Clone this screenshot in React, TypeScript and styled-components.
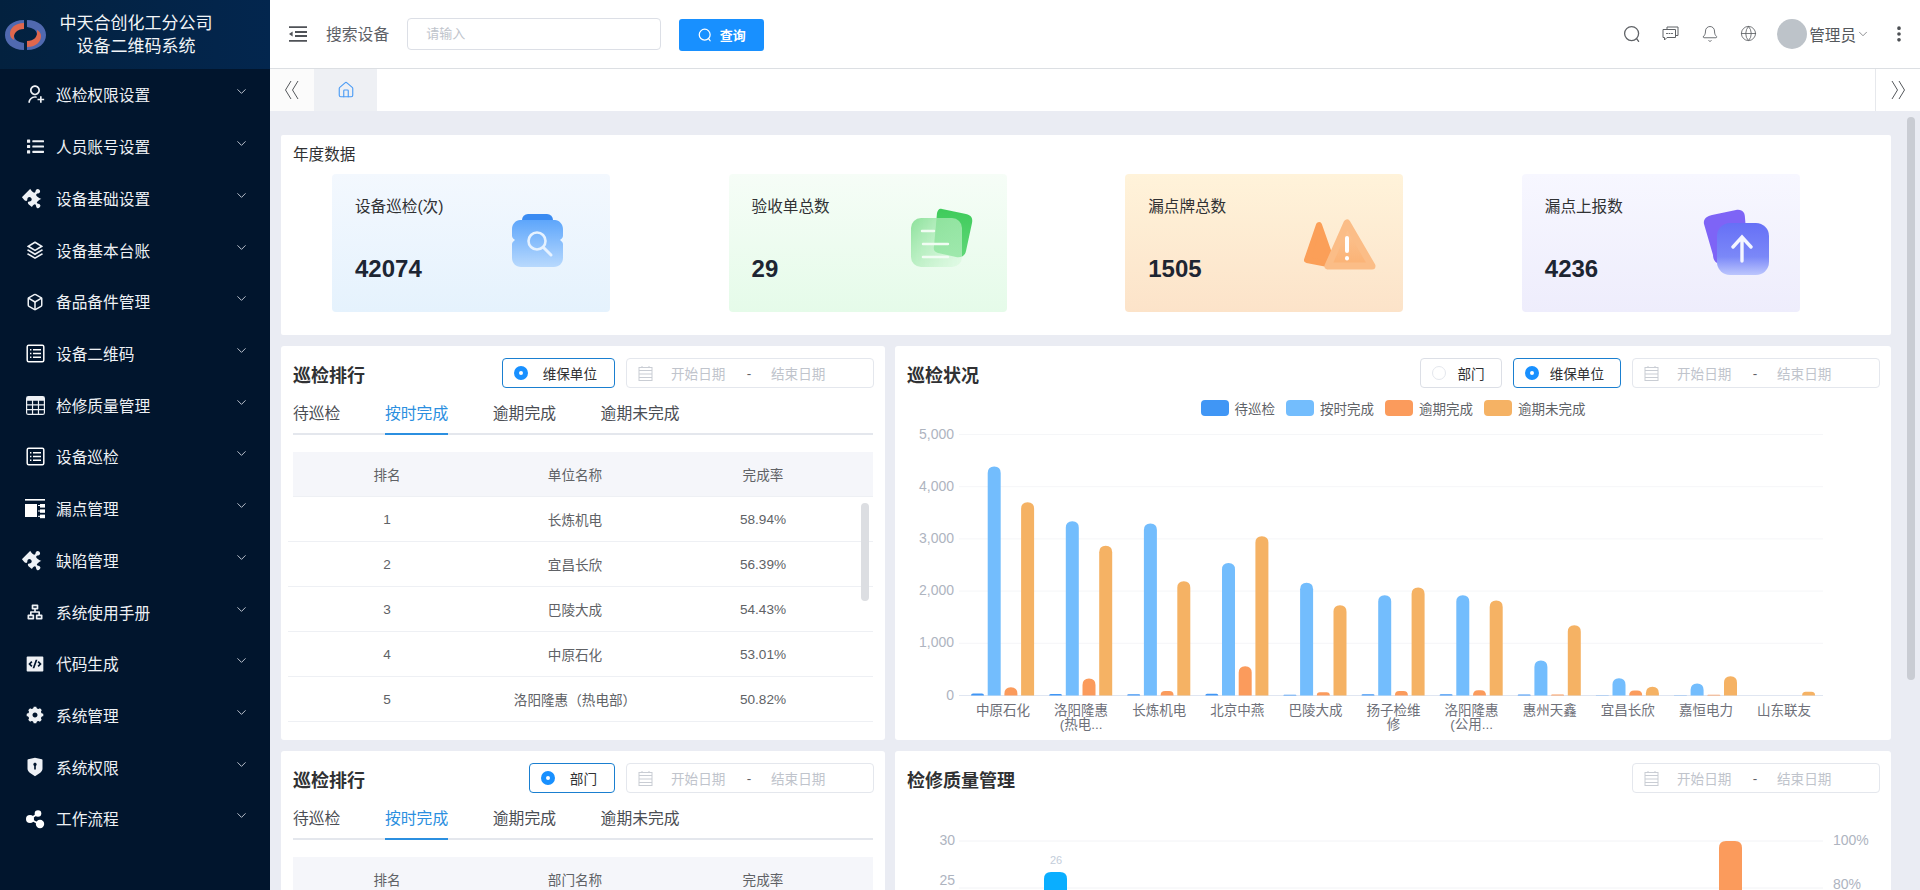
import React from "react";
import styled, { createGlobalStyle } from "styled-components";
import { Bell, ChevronDown, EllipsisVertical, Globe, House } from "lucide-react";
import { BsTable } from "react-icons/bs";
import { FaList, FaPuzzlePiece } from "react-icons/fa";
import { FiBox } from "react-icons/fi";
import {
  RiCodeBoxFill,
  RiOrganizationChart,
  RiSettings5Fill,
  RiShieldKeyholeFill,
  RiStackLine,
  RiUserAddLine,
} from "react-icons/ri";

const FONT = `"Liberation Sans", "Noto Sans CJK SC", sans-serif`;
const BLUE = "#1890ff";

const GlobalStyle = createGlobalStyle`
  html, body {
    margin: 0;
    padding: 0;
    height: 100%;
    overflow: hidden;
    font-family: ${FONT};
    color: #303133;
  }
  * { box-sizing: border-box; }
`;

const Page = styled.div`
  display: flex;
  width: 100%;
  height: 100vh;
  overflow: hidden;
`;

/* sidebar */
const Sidebar = styled.aside`
  flex: 0 0 270px;
  background: #01152d;
  color: #fff;
`;

const Brand = styled.div`
  display: flex;
  align-items: center;
  height: 69px;
  padding-left: 5px;
  background: linear-gradient(90deg, #03213f, #03264e);
`;

const BrandName = styled.div`
  width: 162px;
  margin-left: 9px;
  font-size: 17px;
  line-height: 23px;
  text-align: center;
  white-space: nowrap;
  color: #f2f5f8;
`;

const MenuItem = styled.div`
  display: flex;
  align-items: center;
  height: 51.72px;
  padding-left: 25px;
  font-size: 15.7px;
  color: #eef1f5;
`;

const MenuIcon = styled.span`
  display: flex;
  justify-content: center;
  align-items: center;
  width: 20px;
  height: 20px;
  margin-right: 11px;
  font-size: 20px;
`;

const MenuLabel = styled.span`
  flex: 1;
`;

const MenuArrow = styled(ChevronDown)`
  width: 15px;
  height: 15px;
  margin-right: 21px;
  margin-top: -6px;
  color: #c6ccd6;
`;

const PuzzleIcon = styled(FaPuzzlePiece)`
  transform: rotate(45deg);
`;

/* top bar */
const Main = styled.div`
  flex: 1;
  min-width: 0;
  display: flex;
  flex-direction: column;
`;

const TopBar = styled.header`
  flex: 0 0 69px;
  display: flex;
  align-items: center;
  padding: 0 11px 1px 19px;
  background: #fff;
  border-bottom: 1px solid #dcdfe3;
`;

const SearchLabel = styled.span`
  margin-left: 19px;
  font-size: 15.8px;
  color: #5d6066;
`;

const SearchInput = styled.div`
  width: 254px;
  height: 32px;
  margin-left: 18px;
  padding-left: 18px;
  border: 1px solid #dcdfe6;
  border-radius: 4px;
  font-size: 13px;
  line-height: 30px;
  color: #c0c4cc;
`;

const QueryButton = styled.div`
  display: flex;
  align-items: center;
  justify-content: center;
  gap: 8px;
  width: 85px;
  height: 32px;
  margin: 2px 0 0 18px;
  border-radius: 3px;
  background: ${BLUE};
  color: #fff;
  font-size: 13px;
  font-weight: 700;
`;

const TopBarRight = styled.div`
  margin-left: auto;
  display: flex;
  align-items: center;
  color: #5f6266;
`;

const ToolIcon = styled.span`
  display: flex;
  justify-content: center;
  width: 39px;
`;

const Avatar = styled.span`
  width: 30px;
  height: 30px;
  margin-left: 9px;
  border-radius: 50%;
  background: #bdc3c9;
`;

const UserName = styled.span`
  margin-left: 2px;
  font-size: 15.6px;
  color: #55585c;
`;

const DotsButton = styled.span`
  display: flex;
  margin-left: 19px;
  color: #4b4e52;
`;

/* tab strip */
const TabStrip = styled.div`
  flex: 0 0 42px;
  display: flex;
  align-items: stretch;
  background: #fff;
`;

const StripButton = styled.div`
  flex: 0 0 44px;
  display: flex;
  align-items: center;
  justify-content: center;
  color: #6d7076;
  background: #fbfbfb;
`;

const StripButtonRight = styled(StripButton)`
  flex-basis: 45px;
  margin-left: auto;
  background: #fff;
  border-left: 1px solid #e6e8ec;
`;

const HomeTab = styled.div`
  flex: 0 0 63px;
  display: flex;
  align-items: center;
  justify-content: center;
  background: #eef0f4;
  color: #4a9bf5;
`;

/* content */
const Content = styled.main`
  position: relative;
  flex: 1;
  min-height: 0;
  overflow: hidden;
  padding: 24px 29px 0 11px;
  background: #eaecf3;
`;

const PageScrollThumb = styled.div`
  position: absolute;
  top: 6px;
  right: 5px;
  width: 8px;
  height: 563px;
  border-radius: 4px;
  background: #c9ccd3;
`;

const YearCard = styled.section`
  height: 200px;
  padding-top: 10px;
  border-radius: 2px;
  background: #fff;
`;

const YearTitle = styled.div`
  padding-left: 12px;
  font-size: 15.6px;
  line-height: 20px;
  color: #303133;
`;

const StatRow = styled.div`
  display: flex;
  gap: 118.6px;
  margin-top: 9px;
  padding-left: 51px;
`;

const StatCard = styled.div<{ $from: string; $to: string }>`
  display: flex;
  justify-content: space-between;
  align-items: center;
  width: 278px;
  height: 138px;
  padding: 0 25px 0 23px;
  border-radius: 4px;
  background: linear-gradient(180deg, ${(p) => p.$from}, ${(p) => p.$to});
`;

const StatText = styled.div`
  align-self: stretch;
  padding-top: 22px;
`;

const StatLabel = styled.div`
  font-size: 15.6px;
  line-height: 22px;
  color: #303133;
`;

const StatValue = styled.div`
  margin-top: 37px;
  font-size: 24px;
  line-height: 28px;
  font-weight: 700;
  color: #1d2532;
`;

const StatIcon = styled.svg`
  flex: 0 0 80px;
  width: 80px;
  height: 80px;
  filter: blur(0.6px);
`;

const PanelGrid = styled.div`
  display: grid;
  grid-template-columns: 604px 996px;
  grid-auto-rows: 394px;
  gap: 11px 10px;
  margin-top: 11px;
`;

const Panel = styled.section`
  padding: 12px;
  border-radius: 3px;
  background: #fff;
`;

const PanelHead = styled.div`
  display: flex;
  align-items: center;
  justify-content: space-between;
  height: 30px;
  margin-right: -1px;
`;

const PanelTitle = styled.h3`
  margin: 2px 0 0;
  font-size: 18px;
  font-weight: 700;
  color: #303133;
`;

const Controls = styled.div`
  display: flex;
  gap: 11px;
`;

const RadioBox = styled.div<{ $on?: boolean; $tight?: boolean }>`
  display: flex;
  align-items: center;
  gap: ${(p) => (p.$tight ? 11 : 15)}px;
  height: 30px;
  padding: 0 ${(p) => (p.$tight ? 16 : 17)}px 0 11px;
  border: 1px solid ${(p) => (p.$on ? "#1a7fd0" : "#dcdfe6")};
  border-radius: 4px;
  font-size: 13.6px;
  color: #303133;
`;

const RadioDot = styled.span<{ $on?: boolean }>`
  width: 14px;
  height: 14px;
  border-radius: 50%;
  background: #fff;
  border: ${(p) => (p.$on ? `5px solid ${BLUE}` : "1px solid #e4e7ed")};
`;

const DateBox = styled.div`
  display: flex;
  align-items: center;
  width: 248px;
  height: 30px;
  padding-left: 11px;
  border: 1px solid #e4e7ed;
  border-radius: 4px;
  font-size: 13.6px;
  color: #c0c4cc;
`;

const DateText = styled.span`
  width: 56px;
  white-space: nowrap;
`;

const DateDash = styled.span`
  width: 44px;
  text-align: center;
  color: #606266;
`;

const CalendarSvg = styled.svg`
  width: 15px;
  height: 15px;
  margin-right: 18px;
`;

const Tabs = styled.div`
  display: flex;
  gap: 44.6px;
  height: 47px;
  padding-top: 15px;
  border-bottom: 2px solid #e4e7ed;
`;

const TabItem = styled.div<{ $on?: boolean }>`
  height: 32px;
  font-size: 15.8px;
  line-height: 22px;
  color: ${(p) => (p.$on ? "#2b8fe0" : "#4b4e54")};
  border-bottom: 2px solid ${(p) => (p.$on ? "#2b8fe0" : "transparent")};
`;

const TableWrap = styled.div`
  position: relative;
  margin-top: 17px;
`;

const TableRow = styled.div<{ $head?: boolean }>`
  display: grid;
  grid-template-columns: repeat(3, 188px);
  align-items: center;
  height: 45px;
  margin-left: ${(p) => (p.$head ? 0 : -5)}px;
  padding-left: ${(p) => (p.$head ? 0 : 5)}px;
  background: ${(p) => (p.$head ? "#f5f6fa" : "#fff")};
  border-bottom: 1px solid #eef0f4;
  font-size: 13.6px;
  text-align: center;
  color: #606266;
`;

const TableThumb = styled.div`
  position: absolute;
  top: 51px;
  right: 4px;
  width: 8px;
  height: 98px;
  border-radius: 4px;
  background: #dcdee2;
`;

const Legend = styled.div`
  display: flex;
  justify-content: center;
  gap: 11px;
  margin-top: 12px;
`;

const LegendItem = styled.div`
  display: flex;
  align-items: center;
  gap: 6px;
  height: 16px;
  font-size: 13.5px;
  color: #5f6368;
`;

const LegendSwatch = styled.span<{ $color: string }>`
  width: 28px;
  height: 16px;
  border-radius: 4px;
  background: ${(p) => p.$color};
`;

const ChartSvg = styled.svg`
  display: block;
  font-family: ${FONT};
`;

const StatusChartSvg = styled(ChartSvg)`
  margin-top: 8px;
`;

/* drawings */
const LOGO_BLUE = "M19 1C7 1 0 8 0 16s7 15 19 15v-7c-6-1-10-3-10-8s4-7 10-8z";
const LOGO_ORANGE = "M19 4C10 4 5 9 5 15c0 3 2 5 4 6-1-7 3-11 10-11z";

const BrandLogo = () => (
  <svg width="41" height="32" viewBox="0 0 41 32">
    <path d={LOGO_BLUE} fill="#5069b0" />
    <path d={LOGO_ORANGE} fill="#e0674d" />
    <g transform="rotate(180 20.5 16)">
      <path d={LOGO_BLUE} fill="#5069b0" />
      <path d={LOGO_ORANGE} fill="#e0674d" />
    </g>
  </svg>
);

const LeakIcon = () => (
  <svg width="20" height="20" viewBox="0 0 20 20" fill="#fff">
    <rect x="0" y="0" width="20" height="1.6" />
    <rect x="0" y="5" width="12" height="13" />
    <rect x="15" y="5" width="5" height="3.6" />
    <rect x="15" y="10.4" width="5" height="3.4" />
    <rect x="15" y="15.6" width="5" height="3.6" />
    <rect x="13" y="6" width="2" height="1" />
    <rect x="13" y="11.5" width="2" height="1" />
    <rect x="13" y="16.8" width="2" height="1" />
  </svg>
);

const ListBoxIcon = () => (
  <svg width="19" height="19" viewBox="0 0 19 19" fill="none" stroke="#fff" strokeWidth="1.5">
    <rect x="1.2" y="1.2" width="16.6" height="16.6" rx="1.5" />
    <path d="M4 5.8h1.4M7 5.8h8M4 9.5h1.4M7 9.5h8M4 13.2h1.4M7 13.2h8" />
  </svg>
);

const ShareIcon = () => (
  <svg width="20" height="20" viewBox="0 0 20 20" fill="#fff">
    <path d="M5 10 13 4.5M5 10l10 5.5" stroke="#fff" strokeWidth="1.6" />
    <circle cx="5" cy="10" r="4" />
    <circle cx="13" cy="4.5" r="3.3" />
    <circle cx="15" cy="15" r="4.2" />
  </svg>
);

const CollapseMark = () => (
  <svg width="16" height="20" viewBox="0 0 16 20" fill="none" stroke="#55585c" strokeWidth="1">
    <path d="M7 1 1.5 10 7 19M14 1 8.5 10 14 19" />
  </svg>
);

const ExpandMark = () => (
  <svg width="16" height="20" viewBox="0 0 16 20" fill="none" stroke="#55585c" strokeWidth="1">
    <path d="M2 1l5.5 9L2 19M9 1l5.5 9L9 19" />
  </svg>
);

const FoldIcon = () => (
  <svg width="18" height="16" viewBox="0 0 18 16" fill="none" stroke="#4f5257" strokeWidth="1.8">
    <path d="M0 1.2h18M6 6h12M6 10h12M0 14.8h18" />
    <path d="M0 8l3.6-2.6v5.2z" fill="#4f5257" stroke="none" />
  </svg>
);

const SearchGlyph = ({ size = 18, sw = 1.3 }: { size?: number; sw?: number }) => (
  <svg width={size} height={size} viewBox="0 0 18 18" fill="none" stroke="currentColor" strokeWidth={sw}>
    <circle cx="8.6" cy="8.6" r="7" />
    <path d="M13.6 13.6 15.6 16.4" strokeLinecap="round" />
  </svg>
);

const ChatGlyph = () => (
  <svg width="17" height="16" viewBox="0 0 17 16" fill="none" stroke="currentColor" strokeWidth="1">
    <path d="M5 3V1h11v8.5h-2" />
    <path d="M1 3.5h12.5v8H5L2.5 14v-2.5H1z" />
    <path d="M4.5 7.5h1M7 7.5h1M9.5 7.5h1" strokeLinecap="round" />
  </svg>
);

const CalendarIcon = () => (
  <CalendarSvg viewBox="0 0 15 15" fill="none" stroke="#c9cdd4" strokeWidth="1">
    <rect x="1" y="1.5" width="13" height="13" />
    <path d="M1 4.5h13M1 8h13M1 11.5h13M4 0v2M11 0v2" />
  </CalendarSvg>
);

const SearchStatIcon = () => (
  <StatIcon viewBox="0 0 80 80">
    <defs>
      <linearGradient id="sg1" x1="0" y1="0" x2="0" y2="1">
        <stop offset="0" stopColor="#5ea6fb" />
        <stop offset="1" stopColor="#b8d9fd" />
      </linearGradient>
    </defs>
    <rect x="17" y="11" width="31" height="14" rx="6" fill="#3a8bf2" />
    <path
      d="M15 17h35c4 0 8 4 8 9v7c0 2-2 3-3 4 1 1 3 2 3 4v14c0 5-4 9-9 9H16c-5 0-9-4-9-9V41c0-2 2-3 3-4-1-1-3-2-3-4v-7c0-5 4-9 8-9z"
      fill="url(#sg1)"
    />
    <circle cx="32" cy="38" r="8.5" fill="none" stroke="#e6f2ff" strokeWidth="2.6" />
    <path d="M38.5 44.5 46 52" stroke="#e6f2ff" strokeWidth="3" strokeLinecap="round" />
  </StatIcon>
);

const DocStatIcon = () => (
  <StatIcon viewBox="0 0 80 80">
    <defs>
      <linearGradient id="sg2" x1="0" y1="0" x2="1" y2="0.8">
        <stop offset="0" stopColor="#86df95" stopOpacity="0.95" />
        <stop offset="1" stopColor="#d2f7d8" stopOpacity="0.55" />
      </linearGradient>
      <linearGradient id="sg2b" x1="0" y1="0" x2="0" y2="1">
        <stop offset="0" stopColor="#3fcb5b" />
        <stop offset="1" stopColor="#5fd777" />
      </linearGradient>
    </defs>
    <path d="M40 6l24 5c5 1 7 4 6 9l-6 28c-1 5-5 7-10 6L36 50c-3-1-5-3-4-7l3-33c1-3 2-5 5-4z" fill="url(#sg2b)" />
    <rect x="9" y="15" width="51" height="49" rx="10" fill="url(#sg2)" />
    <path d="M20 28h12M21 41h25M21 54h25" stroke="#f1fcf3" strokeWidth="2.4" strokeLinecap="round" />
  </StatIcon>
);

const WarnStatIcon = () => (
  <StatIcon viewBox="0 0 80 80">
    <defs>
      <linearGradient id="sg3" x1="0" y1="0" x2="0" y2="1">
        <stop offset="0" stopColor="#fcc595" />
        <stop offset="1" stopColor="#fbb274" />
      </linearGradient>
    </defs>
    <path d="M21 22 9 57l26 5z" fill="#fb9f58" stroke="#fb9f58" strokeWidth="6" strokeLinejoin="round" />
    <path d="M49 20 30 63h44z" fill="url(#sg3)" stroke="#fbbd87" strokeWidth="7" strokeLinejoin="round" />
    <rect x="47" y="33" width="4" height="17" rx="2" fill="#fff" />
    <rect x="47" y="53" width="4" height="4.5" rx="2" fill="#fff" />
  </StatIcon>
);

const UploadStatIcon = () => (
  <StatIcon viewBox="0 0 80 80">
    <defs>
      <linearGradient id="sg4" x1="0" y1="0" x2="0" y2="1">
        <stop offset="0" stopColor="#6670f6" />
        <stop offset="0.65" stopColor="#7b88f8" />
        <stop offset="1" stopColor="#bcc6fd" />
      </linearGradient>
    </defs>
    <path d="M17 12l24-5c7-1 9 3 9 8l3 36c0 5-4 9-9 9l-18 1c-5 0-8-4-8-9L9 21c-1-5 3-8 8-9z" fill="#7e64f6" />
    <rect x="22" y="20" width="52" height="52" rx="13" fill="url(#sg4)" />
    <path d="M47 58V35M38 44l9-10 9 10" fill="none" stroke="#f4f6ff" strokeWidth="3.4" strokeLinecap="round" />
  </StatIcon>
);

/* data */
const menu: { label: string; icon: React.ReactNode }[] = [
  { label: "巡检权限设置", icon: <RiUserAddLine size={23} /> },
  { label: "人员账号设置", icon: <FaList size={17} /> },
  { label: "设备基础设置", icon: <PuzzleIcon size={20} /> },
  { label: "设备基本台账", icon: <RiStackLine size={21} /> },
  { label: "备品备件管理", icon: <FiBox size={18} /> },
  { label: "设备二维码", icon: <ListBoxIcon /> },
  { label: "检修质量管理", icon: <BsTable size={19} /> },
  { label: "设备巡检", icon: <ListBoxIcon /> },
  { label: "漏点管理", icon: <LeakIcon /> },
  { label: "缺陷管理", icon: <PuzzleIcon size={20} /> },
  { label: "系统使用手册", icon: <RiOrganizationChart size={22} /> },
  { label: "代码生成", icon: <RiCodeBoxFill size={22} /> },
  { label: "系统管理", icon: <RiSettings5Fill size={22} /> },
  { label: "系统权限", icon: <RiShieldKeyholeFill size={22} /> },
  { label: "工作流程", icon: <ShareIcon /> },
];

const stats = [
  { label: "设备巡检(次)", value: "42074", from: "#f3f8fe", to: "#e5f2fd", icon: <SearchStatIcon /> },
  { label: "验收单总数", value: "29", from: "#f6fdf7", to: "#e5fbe9", icon: <DocStatIcon /> },
  { label: "漏点牌总数", value: "1505", from: "#fff3da", to: "#fce3c9", icon: <WarnStatIcon /> },
  { label: "漏点上报数", value: "4236", from: "#f7f7ff", to: "#eeedfc", icon: <UploadStatIcon /> },
];

const tabNames = ["待巡检", "按时完成", "逾期完成", "逾期未完成"];

const ranks = [
  ["1", "长炼机电", "58.94%"],
  ["2", "宜昌长欣", "56.39%"],
  ["3", "巴陵大成", "54.43%"],
  ["4", "中原石化", "53.01%"],
  ["5", "洛阳隆惠（热电部）", "50.82%"],
];

const COLORS = ["#4096f5", "#73bdfd", "#fb9b5c", "#f5b264"];
const series = ["待巡检", "按时完成", "逾期完成", "逾期未完成"];

const categories: { name: string[]; values: number[] }[] = [
  { name: ["中原石化"], values: [40, 4387, 160, 3700] },
  { name: ["洛阳隆惠", "(热电..."], values: [30, 3340, 325, 2870] },
  { name: ["长炼机电"], values: [25, 3295, 85, 2190] },
  { name: ["北京中燕"], values: [35, 2540, 560, 3050] },
  { name: ["巴陵大成"], values: [15, 2160, 60, 1730] },
  { name: ["扬子检维", "修"], values: [25, 1920, 85, 2070] },
  { name: ["洛阳隆惠", "(公用..."], values: [25, 1920, 100, 1820] },
  { name: ["惠州天鑫"], values: [20, 670, 20, 1345] },
  { name: ["宜昌长欣"], values: [5, 330, 95, 170] },
  { name: ["嘉恒电力"], values: [5, 230, 15, 370] },
  { name: ["山东联友"], values: [0, 0, 0, 70] },
];

const topRounded = (x: number, base: number, w: number, h: number, r: number) => {
  const rad = Math.min(r, h, w / 2);
  return `M${x} ${base}V${base - h + rad}Q${x} ${base - h} ${x + rad} ${base - h}H${x + w - rad}Q${x + w} ${base - h} ${x + w} ${base - h + rad}V${base}Z`;
};

/* svg local coordinates: status chart starts at page (907, 424) */
const StatusChart = () => {
  const base = 271.5;
  const unit = 52.2 / 1000;
  const left = 57;
  const step = 78.1;
  return (
    <StatusChartSvg width="972" height="316" viewBox="0 0 972 316">
      {[0, 1, 2, 3, 4, 5].map((n) => (
        <g key={n}>
          <line
            x1={left - 5}
            x2="916"
            y1={base - n * 52.2}
            y2={base - n * 52.2}
            stroke={n === 0 ? "#e0e6f1" : "#f5f6f8"}
          />
          <text x="47" y={base - n * 52.2 + 4} textAnchor="end" fontSize="14" fill="#aeb4bf">
            {n === 0 ? "0" : `${n},000`}
          </text>
        </g>
      ))}
      {categories.map((cat, i) => {
        const center = left + step * i + 39;
        return (
          <g key={cat.name.join("")}>
            {cat.values.map((v, s) =>
              v > 0 ? (
                <path
                  key={series[s]}
                  d={topRounded(center - 32 + s * 16.7, base, 13, v * unit, 6.5)}
                  fill={COLORS[s]}
                />
              ) : null,
            )}
            {cat.name.map((line, l) => (
              <text
                key={line}
                x={center}
                y={base + 19 + l * 14}
                textAnchor="middle"
                fontSize="13.5"
                fill="#6e7079"
              >
                {line}
              </text>
            ))}
          </g>
        );
      })}
    </StatusChartSvg>
  );
};

/* svg local coordinates: quality chart starts at page (907, 793) */
const QualityChart = () => (
  <ChartSvg width="972" height="100" viewBox="0 0 972 100">
    <line x1="52" x2="916" y1="48" y2="48" stroke="#f2f3f6" />
    <line x1="52" x2="916" y1="95" y2="95" stroke="#f2f3f6" />
    <text x="48" y="52" textAnchor="end" fontSize="14" fill="#aeb4bf">30</text>
    <text x="48" y="92" textAnchor="end" fontSize="14" fill="#aeb4bf">25</text>
    <text x="926" y="52" fontSize="14" fill="#aeb4bf">100%</text>
    <text x="926" y="96" fontSize="14" fill="#aeb4bf">80%</text>
    <text x="149" y="71" textAnchor="middle" fontSize="11" fill="#c3cdda">26</text>
    <path d={topRounded(137, 100, 23, 21, 7)} fill="#0aaeff" />
    <path d={topRounded(812, 100, 23, 52, 7)} fill="#fb9b5c" />
  </ChartSvg>
);

const RadioOption = ({ label, on, tight }: { label: string; on?: boolean; tight?: boolean }) => (
  <RadioBox $on={on} $tight={tight}>
    <RadioDot $on={on} />
    {label}
  </RadioBox>
);

const DateRange = () => (
  <DateBox>
    <CalendarIcon />
    <DateText>开始日期</DateText>
    <DateDash>-</DateDash>
    <DateText>结束日期</DateText>
  </DateBox>
);

const RankPanel = ({ unit, nameCol, rows }: { unit: string; nameCol: string; rows: string[][] }) => (
  <Panel>
    <PanelHead>
      <PanelTitle>巡检排行</PanelTitle>
      <Controls>
        <RadioOption label={unit} on />
        <DateRange />
      </Controls>
    </PanelHead>
    <Tabs>
      {tabNames.map((name) => (
        <TabItem key={name} $on={name === "按时完成"}>
          {name}
        </TabItem>
      ))}
    </Tabs>
    <TableWrap>
      <TableRow $head>
        <span>排名</span>
        <span>{nameCol}</span>
        <span>完成率</span>
      </TableRow>
      {rows.map((row) => (
        <TableRow key={row[0]}>
          {row.map((cell) => (
            <span key={cell}>{cell}</span>
          ))}
        </TableRow>
      ))}
      {rows.length > 0 && <TableThumb />}
    </TableWrap>
  </Panel>
);

const App = () => (
  <>
    <GlobalStyle />
    <Page>
      <Sidebar>
        <Brand>
          <BrandLogo />
          <BrandName>
            中天合创化工分公司
            <br />
            设备二维码系统
          </BrandName>
        </Brand>
        {menu.map((item) => (
          <MenuItem key={item.label}>
            <MenuIcon>{item.icon}</MenuIcon>
            <MenuLabel>{item.label}</MenuLabel>
            <MenuArrow strokeWidth={1.5} />
          </MenuItem>
        ))}
      </Sidebar>
      <Main>
        <TopBar>
          <FoldIcon />
          <SearchLabel>搜索设备</SearchLabel>
          <SearchInput>请输入</SearchInput>
          <QueryButton>
            <SearchGlyph size={14} sw={1.6} />
            查询
          </QueryButton>
          <TopBarRight>
            <ToolIcon>
              <SearchGlyph />
            </ToolIcon>
            <ToolIcon>
              <ChatGlyph />
            </ToolIcon>
            <ToolIcon>
              <Bell size={18} strokeWidth={1.2} />
            </ToolIcon>
            <ToolIcon>
              <Globe size={17} strokeWidth={1.2} />
            </ToolIcon>
            <Avatar />
            <UserName>管理员</UserName>
            <ChevronDown size={14} strokeWidth={1.2} />
            <DotsButton>
              <EllipsisVertical size={20} strokeWidth={2.4} />
            </DotsButton>
          </TopBarRight>
        </TopBar>
        <TabStrip>
          <StripButton>
            <CollapseMark />
          </StripButton>
          <HomeTab>
            <House size={18} strokeWidth={1.5} />
          </HomeTab>
          <StripButtonRight>
            <ExpandMark />
          </StripButtonRight>
        </TabStrip>
        <Content>
          <YearCard>
            <YearTitle>年度数据</YearTitle>
            <StatRow>
              {stats.map((s) => (
                <StatCard key={s.label} $from={s.from} $to={s.to}>
                  <StatText>
                    <StatLabel>{s.label}</StatLabel>
                    <StatValue>{s.value}</StatValue>
                  </StatText>
                  {s.icon}
                </StatCard>
              ))}
            </StatRow>
          </YearCard>
          <PanelGrid>
            <RankPanel unit="维保单位" nameCol="单位名称" rows={ranks} />
            <Panel>
              <PanelHead>
                <PanelTitle>巡检状况</PanelTitle>
                <Controls>
                  <RadioOption label="部门" tight />
                  <RadioOption label="维保单位" on tight />
                  <DateRange />
                </Controls>
              </PanelHead>
              <Legend>
                {series.map((name, i) => (
                  <LegendItem key={name}>
                    <LegendSwatch $color={COLORS[i]} />
                    {name}
                  </LegendItem>
                ))}
              </Legend>
              <StatusChart />
            </Panel>
            <RankPanel unit="部门" nameCol="部门名称" rows={[]} />
            <Panel>
              <PanelHead>
                <PanelTitle>检修质量管理</PanelTitle>
                <Controls>
                  <DateRange />
                </Controls>
              </PanelHead>
              <QualityChart />
            </Panel>
          </PanelGrid>
          <PageScrollThumb />
        </Content>
      </Main>
    </Page>
  </>
);

export default App;
